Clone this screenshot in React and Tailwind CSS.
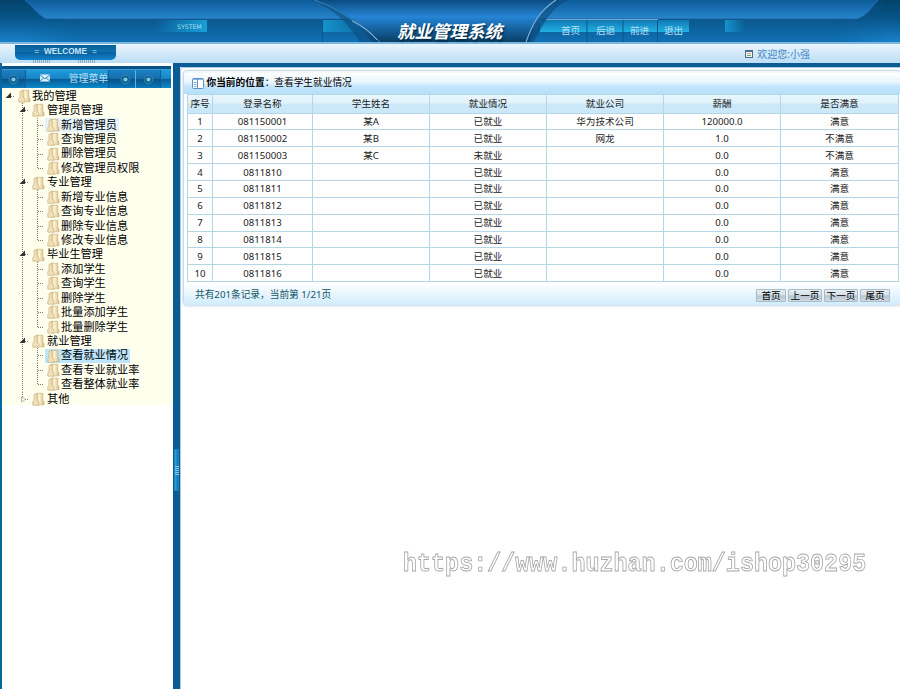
import React from "react";

const tree = [
  { name: "管理员管理", open: true, items: ["新增管理员", "查询管理员", "删除管理员", "修改管理员权限"] },
  { name: "专业管理", open: true, items: ["新增专业信息", "查询专业信息", "删除专业信息", "修改专业信息"] },
  { name: "毕业生管理", open: true, items: ["添加学生", "查询学生", "删除学生", "批量添加学生", "批量删除学生"] },
  { name: "就业管理", open: true, items: ["查看就业情况", "查看专业就业率", "查看整体就业率"] },
  { name: "其他", open: false, items: [] },
];

const headers = ["序号", "登录名称", "学生姓名", "就业情况", "就业公司", "薪酬", "是否满意"];

const rows = [
  ["1", "081150001", "某A", "已就业", "华为技术公司", "120000.0", "满意"],
  ["2", "081150002", "某B", "已就业", "网龙", "1.0", "不满意"],
  ["3", "081150003", "某C", "未就业", "", "0.0", "不满意"],
  ["4", "0811810", "", "已就业", "", "0.0", "满意"],
  ["5", "0811811", "", "已就业", "", "0.0", "满意"],
  ["6", "0811812", "", "已就业", "", "0.0", "满意"],
  ["7", "0811813", "", "已就业", "", "0.0", "满意"],
  ["8", "0811814", "", "已就业", "", "0.0", "满意"],
  ["9", "0811815", "", "已就业", "", "0.0", "满意"],
  ["10", "0811816", "", "已就业", "", "0.0", "满意"],
];

function HeaderArt() {
  return (
    <svg className="absolute inset-0" width="900" height="42" viewBox="0 0 900 42">
      <defs>
        <linearGradient id="base" x1="0" y1="0" x2="0" y2="1">
          <stop offset="0.42" stopColor="#0a568a" />
          <stop offset="1" stopColor="#1071b5" />
        </linearGradient>
        <linearGradient id="corner" x1="0" y1="0" x2="0" y2="1">
          <stop offset="0" stopColor="#034269" />
          <stop offset="0.45" stopColor="#07568b" />
          <stop offset="1" stopColor="#1a80c8" />
        </linearGradient>
        <linearGradient id="fadeL" x1="0" x2="1">
          <stop offset="0.3" stopColor="#fff" />
          <stop offset="1" stopColor="#000" />
        </linearGradient>
        <linearGradient id="fadeR" x1="1" x2="0">
          <stop offset="0.2" stopColor="#fff" />
          <stop offset="1" stopColor="#000" />
        </linearGradient>
        <mask id="ml"><rect width="80" height="42" fill="url(#fadeL)" /></mask>
        <mask id="mr"><rect x="838" width="62" height="42" fill="url(#fadeR)" /></mask>
        <linearGradient id="band" x1="0" y1="0" x2="0" y2="1">
          <stop offset="0" stopColor="#0d5b99" />
          <stop offset="0.5" stopColor="#1a70b3" />
          <stop offset="1" stopColor="#2585cb" />
        </linearGradient>
        <linearGradient id="mid" x1="0" y1="0" x2="0" y2="1">
          <stop offset="0" stopColor="#0b4c80" />
          <stop offset="0.4" stopColor="#2685d6" />
          <stop offset="0.55" stopColor="#1d72b9" />
          <stop offset="1" stopColor="#083f66" />
        </linearGradient>
        <linearGradient id="cyanR" x1="0" x2="1">
          <stop offset="0" stopColor="#159ad0" stopOpacity="0" />
          <stop offset="1" stopColor="#17a0d6" />
        </linearGradient>
        <linearGradient id="cyanL" x1="0" x2="1">
          <stop offset="0" stopColor="#1593cb" />
          <stop offset="1" stopColor="#1593cb" stopOpacity="0" />
        </linearGradient>
        <linearGradient id="btn" x1="0" y1="0" x2="0" y2="1">
          <stop offset="0" stopColor="#1079b3" />
          <stop offset="1" stopColor="#20b0e3" />
        </linearGradient>
      </defs>
      <rect width="900" height="42" fill="url(#base)" />
      <rect width="80" height="42" fill="url(#corner)" mask="url(#ml)" />
      <rect x="838" width="62" height="42" fill="url(#corner)" mask="url(#mr)" />
      <path d="M25 0C33 6 37 14 46 18.500H857C867 16 871 7 878 0Z" fill="url(#band)" />
      <path d="M25 0C33 6 37 14 46 18.500H857C867 16 871 7 878 0" fill="none" stroke="#2a72b8" />
      <rect x="155" y="20" width="52" height="12" fill="url(#cyanR)" />
      <rect x="323" y="20" width="50" height="12" fill="url(#cyanL)" />
      <rect x="725" y="20" width="20" height="12" fill="url(#cyanL)" />
      <path d="M322.500 20V42" stroke="#0b568a" />
      <rect x="540" y="20" width="149" height="12" fill="url(#btn)" />
      <path d="M545 19.500H658" stroke="#6aa7c8" />
      <path d="M587 20V42M623 20V42M657.500 20V42" stroke="#0b568a" />
      <path d="M312 0C340 9 354 20 372 42H530C541 20 545 10 560 0Z" fill="url(#mid)" />
      <path d="M318 0C350 14 364 28 381 42H360C348 24 334 8 310 0Z" fill="#0a4d80" opacity=".6" />
      <path d="M314 0C334 6 348 18 358 23Q370 31 380 42" fill="none" stroke="#3f86bb" strokeWidth="1" />
      <path d="M352 21Q368 29 377 40" fill="none" stroke="#a7cfe9" strokeWidth=".8" />
      <path d="M526 42C532 25 538 11 557 0H568C548 10 542 28 534 42Z" fill="#0b4a7a" opacity=".6" />
      <path d="M526 42C532 25 539 11 556 0" fill="none" stroke="#7db7df" strokeWidth="1.100" />
    </svg>
  );
}

function Folder() {
  return (
    <svg className="shrink-0" width="13" height="14" viewBox="0 0 13 14">
      <defs>
        <linearGradient id="fold" x1="0" x2="1">
          <stop offset="0" stopColor="#dcc088" />
          <stop offset="0.4" stopColor="#fff5d8" />
          <stop offset="1" stopColor="#d8bb82" />
        </linearGradient>
      </defs>
      <path d="M4 1.300H10.800V8.500L12 9.500V12.800H4Z" fill="url(#fold)" stroke="#c4a870" strokeWidth=".6" />
      <path d="M2 2.500L5 1.500V8.500L7 10V13.200H.8V9.500L2 8.500Z" fill="#f1e1bb" stroke="#c4a870" strokeWidth=".6" />
    </svg>
  );
}

function Twisty({ open, last, root }) {
  return (
    <svg className="shrink-0" width="14" height="14.400" viewBox="0 0 14 14.400">
      {!root && <path d={last ? "M4.500 0V7" : "M4.500 0V14.400"} stroke="#777" strokeDasharray="1 1" />}
      <path d="M5 7.500H10" stroke="#777" strokeDasharray="1 1" />
      {open ? <path d="M7 3.500V9H1.500Z" fill="#333" /> : <path d="M3.500 5V10L7.500 7.500Z" fill="#fff" stroke="#999" strokeWidth=".7" />}
    </svg>
  );
}

function Leaf({ name, last }) {
  const state = name === "查看就业情况" ? "bg-[#bde6fd]" : name === "新增管理员" ? "bg-[#e4f2fa]" : "";
  return (
    <div className="flex h-[14.43px] items-center pl-[16px]">
      <svg className="shrink-0" width="27" height="14.400" viewBox="0 0 27 14.400">
        <path d="M4.500 0V14.400" stroke="#777" strokeDasharray="1 1" />
        <path d={last ? "M19.500 0V8" : "M19.500 0V14.400"} stroke="#777" strokeDasharray="1 1" />
        <path d="M20 7.500H25" stroke="#777" strokeDasharray="1 1" />
      </svg>
      <div className={"flex h-[14px] items-center gap-px pl-[2px] pr-[2px] " + state}>
        <Folder />
        <span>{name}</span>
      </div>
    </div>
  );
}

function Dot() {
  return (
    <svg width="11" height="11" viewBox="0 0 11 11">
      <circle cx="5.500" cy="5.500" r="4.300" fill="#0f6090" stroke="#3a93c4" strokeWidth=".8" />
      <circle cx="5.500" cy="5.500" r="2" fill="#7cc8dc" />
    </svg>
  );
}

function Sidebar() {
  return (
    <aside className="w-[173px] shrink-0 border-l-2 border-[#0b639f] bg-white pt-[3px]">
      <div className="h-[3px] w-[169px] bg-[#075386]" />
      <div className="flex h-[19px] w-[169px] border-t border-[#3b9bd3] bg-[linear-gradient(#1b82c4_0%,#156dab_47%,#085184_50%,#0878bb_100%)]">
        <div className="flex w-[24px] items-center border-r border-[#0d5f96] pl-[6px]"><Dot /></div>
        <div className="flex w-[83px] items-center border-r border-[#0d5f96] bg-[linear-gradient(#209cdc_0%,#1785c6_47%,#085b94_50%,#0c8acc_100%)] pl-[14px]">
          <svg className="mb-[3px]" width="11" height="8" viewBox="0 0 11 8"><path d="M0 0H11V8H0Z" fill="#d8f0fb" /><path d="M0 .5L5.500 5L11 .5M0 7.500L4 4M11 7.500L7 4" fill="none" stroke="#287cb0" /></svg>
          <span className="ml-[19px] whitespace-nowrap text-[9.8px] text-[#b9dff2]">管理菜单</span>
        </div>
        <div className="flex w-[27px] items-center border-r border-[#62b0dc] pl-[11px]"><Dot /></div>
        <div className="flex w-[25px] items-center border-r border-[#0d5f96] pl-[7px]"><Dot /></div>
        <div className="flex-1 bg-[linear-gradient(#209cdc_0%,#1785c6_47%,#085b94_50%,#0c8acc_100%)]" />
      </div>
      <nav className="h-[317px] w-[171px] whitespace-nowrap bg-[#ffffee] pt-[0.8px] text-[11.2px] leading-[14.4px] text-black">
        <div className="flex h-[14.43px] items-center pl-[2px]">
          <Twisty open root />
          <Folder />
          <span className="ml-px">我的管理</span>
        </div>
        {tree.map((g) => (
          <div key={g.name}>
            <div className="flex h-[14.43px] items-center pl-[16px]">
              <Twisty open={g.open} last={!g.open} />
              <Folder />
              <span className="ml-[2px]">{g.name}</span>
            </div>
            {g.items.map((n, i) => <Leaf key={n} name={n} last={i === g.items.length - 1} />)}
          </div>
        ))}
      </nav>
    </aside>
  );
}

function PageButton({ wide, children }) {
  return (
    <button className={"flex h-[13px] items-center justify-center whitespace-nowrap rounded-[1px] border border-[#a9bbc6] bg-[linear-gradient(#e8eff3_0%,#d3dee5_48%,#b5c4ce_52%,#d0dce3_100%)] text-[9.6px] leading-[11px] text-black " + (wide ? "w-[34px]" : "w-[30px]")}>
      {children}
    </button>
  );
}

function Panel() {
  return (
    <section className="ml-[2px] mt-[2px] h-[235px] w-[718px] rounded-[4px] border border-[#bfdcef] bg-white shadow-[0_1px_3px_#c5d3dd]">
      <div className="flex h-[22.500px] items-center rounded-t-[4px] border-t-2 border-[#f2f8fc] bg-[linear-gradient(#ffffff_0%,#e6f4fd_45%,#c2e5fb_65%,#b5e0fa_100%)] pl-[8px] text-[9.7px] text-black">
        <svg width="12" height="11" viewBox="0 0 12 11">
          <rect x=".5" y=".5" width="11" height="10" rx="1" fill="#fff" stroke="#5b8fc9" />
          <path d="M1 1.500H11" stroke="#8fb9e8" /><path d="M5.500 1V10" stroke="#5b8fc9" />
          <path d="M2 4.500H4.500M2 6.500H4.500M2 8.500H4.500" stroke="#7da4d8" />
        </svg>
        <span className="ml-[2.5px] font-bold">你当前的位置</span>
        <span>：查看学生就业情况</span>
      </div>
      <table className="ml-[3px] w-[711px] table-fixed border-collapse text-center text-[9.6px] leading-[13px] text-[#222]">
        <colgroup>
          <col className="w-[25px]" /><col className="w-[100px]" /><col className="w-[117px]" /><col className="w-[117px]" /><col className="w-[117px]" /><col className="w-[117px]" /><col className="w-[118px]" />
        </colgroup>
        <thead>
          <tr className="h-[19px] bg-[linear-gradient(#e9f7fe_0%,#e2f3fc_45%,#cde9f9_55%,#c9e8f9_100%)]">
            {headers.map((h) => <th key={h} className="border border-[#b5d6e6] p-0 font-normal">{h}</th>)}
          </tr>
        </thead>
        <tbody>
          {rows.map((r) => (
            <tr key={r[0]} className="h-[16.87px]">
              {r.map((c, i) => <td key={i} className="border border-[#b5d6e6] p-0">{c}</td>)}
            </tr>
          ))}
        </tbody>
      </table>
      <div className="mt-[1px] flex h-[22px] items-center rounded-b-[4px] bg-[linear-gradient(#ffffff,#d0ecfc)] pl-[11px] pr-[10px] pt-[2px] text-[9.7px] text-[#145566]">
        <span>共有201条记录，当前第 1/21页</span>
        <div className="ml-auto flex gap-[2px]">
          <PageButton>首页</PageButton>
          <PageButton wide>上一页</PageButton>
          <PageButton wide>下一页</PageButton>
          <PageButton>尾页</PageButton>
        </div>
      </div>
    </section>
  );
}

export default function App() {
  return (
    <div className="relative flex h-[689px] w-[900px] flex-col overflow-hidden bg-white font-['Noto_Sans','Noto_Sans_CJK_SC',sans-serif]">
      <header className="relative h-[42px] shrink-0">
        <HeaderArt />
        <div className="relative flex h-full whitespace-nowrap">
          <span className="ml-[177px] mt-[22px] h-[10px] w-[27px] font-['DejaVu_Sans'] text-[6.2px] leading-[10px] text-[#a8def0]">SYSTEM</span>
          <h1 className="ml-[193px] mt-[20px] w-[108px] text-[17.5px] font-bold italic leading-[22px] text-white [text-shadow:1px_2px_2px_#022a48]">就业管理系统</h1>
          <nav className="ml-[56px] flex pt-[24px] text-[9.6px] leading-[13px] text-[#b5dff2]">
            <span className="w-[35px]">首页</span>
            <span className="w-[34px]">后退</span>
            <span className="w-[34px]">前进</span>
            <span>退出</span>
          </nav>
        </div>
      </header>
      <div className="flex h-[21px] shrink-0 justify-between border-t-2 border-[#7fb6de] bg-[linear-gradient(#e9f5fd,#bcdef5)]">
        <div className="ml-[15px] flex flex-col pt-px">
          <div className="flex h-[15px] w-[101px] items-center justify-center gap-[5px] rounded-b-[5px] bg-[linear-gradient(#0a5d96_0%,#0f70ae_45%,#08609c_50%,#1283d0_100%)] font-['Liberation_Sans'] text-[8.2px] font-bold text-[#c8e6f6]">
            <span className="font-normal">=</span><span>WELCOME</span><span className="font-normal">=</span>
          </div>
          <div className="flex justify-between pl-[18px] pr-[20px]">
            <div className="h-[3px] w-[18px] bg-[repeating-linear-gradient(90deg,#91aabd_0_1px,transparent_1px_2px)]" />
            <div className="h-[3px] w-[18px] bg-[repeating-linear-gradient(90deg,#91aabd_0_1px,transparent_1px_2px)]" />
          </div>
        </div>
        <div className="mr-[90px] flex items-center gap-[4px] text-[10px] leading-[12px] text-[#3d83c4]">
          <svg width="8" height="8" viewBox="0 0 8 8"><rect x=".5" y=".5" width="7" height="7" fill="#eef4ed" stroke="#4c6c94" /><path d="M1 1.500H7" stroke="#4c6c94" /><path d="M2 3.500H6" stroke="#d4a184" /><path d="M2 5.500H6" stroke="#67a76b" /></svg>
          <span>欢迎您:小强</span>
        </div>
      </div>
      <div className="flex min-h-0 flex-1">
        <Sidebar />
        <div className="flex w-[7px] shrink-0 items-start bg-[#0a5c93] pt-[386px]">
          <div className="ml-[1px] flex h-[42px] w-[5px] flex-col items-center justify-center gap-[1px] border border-[#247eb4] bg-[linear-gradient(90deg,#27a8e8,#0873bc)]">
            <i className="h-px w-[4px] bg-[#8fc9e9]" /><i className="h-px w-[4px] bg-[#8fc9e9]" /><i className="h-px w-[4px] bg-[#8fc9e9]" /><i className="h-px w-[4px] bg-[#8fc9e9]" /><i className="h-px w-[4px] bg-[#8fc9e9]" />
          </div>
        </div>
        <main className="min-w-0 flex-1">
          <div className="h-[4px] bg-[#0a5c93]" />
          <div className="h-[622px] rounded-tl-[3px] border-l border-t border-[#a9cbe8]">
            <Panel />
          </div>
        </main>
      </div>
      <div className="absolute left-[403px] top-[549px] origin-left scale-y-[1.14] whitespace-nowrap font-['Liberation_Mono',monospace] text-[23.4px] font-bold leading-[30px] text-white [-webkit-text-stroke:0.8px_#a8a8a8]">
        https://www.huzhan.com/ishop30295
      </div>
    </div>
  );
}
